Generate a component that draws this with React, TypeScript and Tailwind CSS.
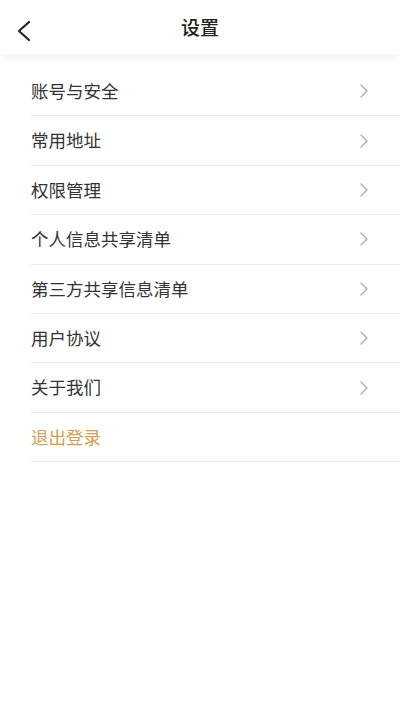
const items = [
  "账号与安全",
  "常用地址",
  "权限管理",
  "个人信息共享清单",
  "第三方共享信息清单",
  "用户协议",
  "关于我们",
];

function Arrow() {
  return (
    <svg width="8" height="14" viewBox="0 0 8 14" fill="none" className="shrink-0">
      <path d="M1 1l6 6-6 6" stroke="#a8a8a8" strokeWidth="1.2" strokeLinecap="round" strokeLinejoin="round" />
    </svg>
  );
}

export default function App() {
  return (
    <div
      className="min-h-[711px] w-[400px] bg-white"
      style={{ fontFamily: '"Noto Sans CJK SC", "Noto Sans", sans-serif' }}
    >
      <header className="relative z-10 flex h-[54px] items-center justify-center bg-white shadow-[0_2px_10px_rgba(0,0,0,0.07)]">
        <button type="button" className="absolute left-[16px] top-[20px]">
          <svg width="16" height="22" viewBox="0 0 16 22" fill="none">
            <path d="M13 2L3 11l10 9" stroke="#222" strokeWidth="2.2" strokeLinecap="round" strokeLinejoin="round" />
          </svg>
        </button>
        <h1 className="text-[19px] font-medium text-[#222]">设置</h1>
      </header>

      <ul className="mt-[13px] pl-[31px]">
        {items.map((t) => (
          <li
            key={t}
            className="flex h-[49.4px] items-center justify-between border-b border-[#ececec] pr-[32px]"
          >
            <span className="text-[17.5px] text-[#333]">{t}</span>
            <Arrow />
          </li>
        ))}
        <li className="flex h-[49.4px] items-center border-b border-[#ececec]">
          <span className="text-[17.5px] text-[#cf9f4f]">退出登录</span>
        </li>
      </ul>
    </div>
  );
}
